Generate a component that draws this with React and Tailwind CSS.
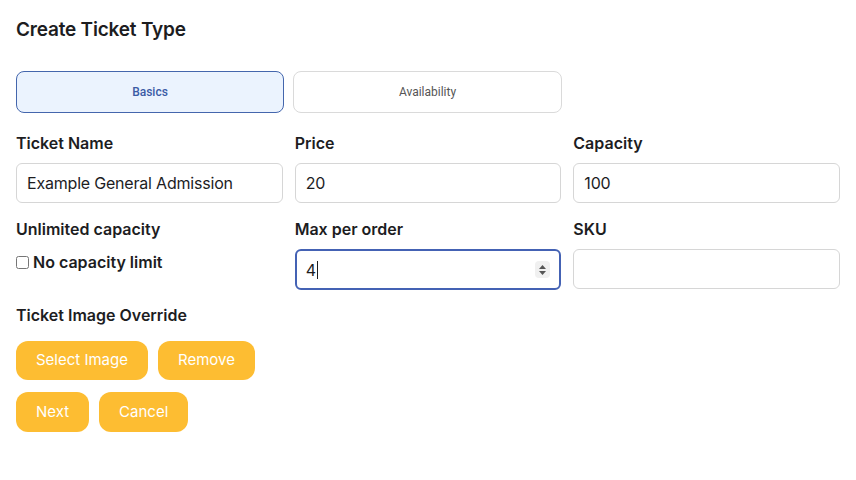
import * as React from 'react'

function Field({ label, children }) {
  return (
    <div className="flex flex-col">
      <label className="text-[16px] font-semibold leading-5 text-[#1d1d1f]">{label}</label>
      <div className="mt-[10px]">{children}</div>
    </div>
  )
}

function TextInput({ value }) {
  return (
    <input
      type="text"
      defaultValue={value}
      className="h-10 w-full rounded-md border border-[#d6d6d6] bg-white px-[10px] text-[16px] tracking-[-0.2px] text-[#1d1d1f] outline-none"
    />
  )
}

export default function App() {
  const [unlimited, setUnlimited] = React.useState(false)

  return (
    <div className="min-h-[480px] bg-white px-4 pt-[19px] font-['Inter',sans-serif]">
      <h2 className="text-[19px] font-semibold leading-[22px] tracking-[-0.2px] text-[#1d1d1f]">Create Ticket Type</h2>

      <div className="mt-[30px] flex gap-[9px] font-['Roboto',sans-serif]">
        <button className="h-[42px] w-[268px] rounded-lg border border-[#4466ad] bg-[#ebf3fe] text-[12px] font-medium text-[#3b5ba5]">
          Basics
        </button>
        <button className="h-[42px] w-[269px] rounded-lg border border-[#dadada] bg-white text-[12px] text-[#555]">
          Availability
        </button>
      </div>

      <div className="mt-5 grid grid-cols-3 gap-x-3 gap-y-4">
        <Field label="Ticket Name">
          <TextInput value="Example General Admission" />
        </Field>
        <Field label="Price">
          <TextInput value="20" />
        </Field>
        <Field label="Capacity">
          <TextInput value="100" />
        </Field>

        <div className="flex flex-col">
          <label className="text-[16px] font-semibold leading-5 text-[#1d1d1f]">Unlimited capacity</label>
          <label className="mt-[13px] flex items-center gap-1 text-[16px] font-semibold leading-5 text-[#1d1d1f]">
            <input
              type="checkbox"
              checked={unlimited}
              onChange={(e) => setUnlimited(e.target.checked)}
              className="h-[13px] w-[13px]"
            />
            No capacity limit
          </label>
        </div>
        <Field label="Max per order">
          <div className="relative h-[41px] rounded-md border-2 border-[#4462b4] bg-white">
            <input
              type="text"
              defaultValue="4"
              className="h-full w-full bg-transparent px-[9px] text-[16px] text-[#1d1d1f] outline-none"
            />
            <span className="absolute left-[20px] top-[10px] h-[18px] w-px bg-[#1d1d1f]" />
            <span className="absolute right-[9px] top-[10px] flex h-[17px] w-[15px] flex-col items-center justify-center gap-[2px] rounded-sm bg-[#f0f0f0]">
              <svg width="7" height="4" viewBox="0 0 7 4"><path d="M3.5 0L7 4H0z" fill="#555" /></svg>
              <svg width="7" height="4" viewBox="0 0 7 4"><path d="M0 0h7L3.5 4z" fill="#555" /></svg>
            </span>
          </div>
        </Field>
        <Field label="SKU">
          <TextInput value="" />
        </Field>
      </div>

      <h3 className="mt-[15px] text-[16px] font-semibold leading-5 text-[#1d1d1f]">Ticket Image Override</h3>

      <div className="mt-4 flex gap-[10px]">
        <button className="h-[39px] rounded-xl bg-[#fdbd32] px-5 text-[15px] text-white">Select Image</button>
        <button className="h-[39px] rounded-xl bg-[#fdbd32] px-5 text-[15px] text-white">Remove</button>
      </div>
      <div className="mt-3 flex gap-[10px]">
        <button className="h-10 rounded-xl bg-[#fdbd32] px-5 text-[15px] text-white">Next</button>
        <button className="h-10 rounded-xl bg-[#fdbd32] px-5 text-[15px] text-white">Cancel</button>
      </div>
    </div>
  )
}
